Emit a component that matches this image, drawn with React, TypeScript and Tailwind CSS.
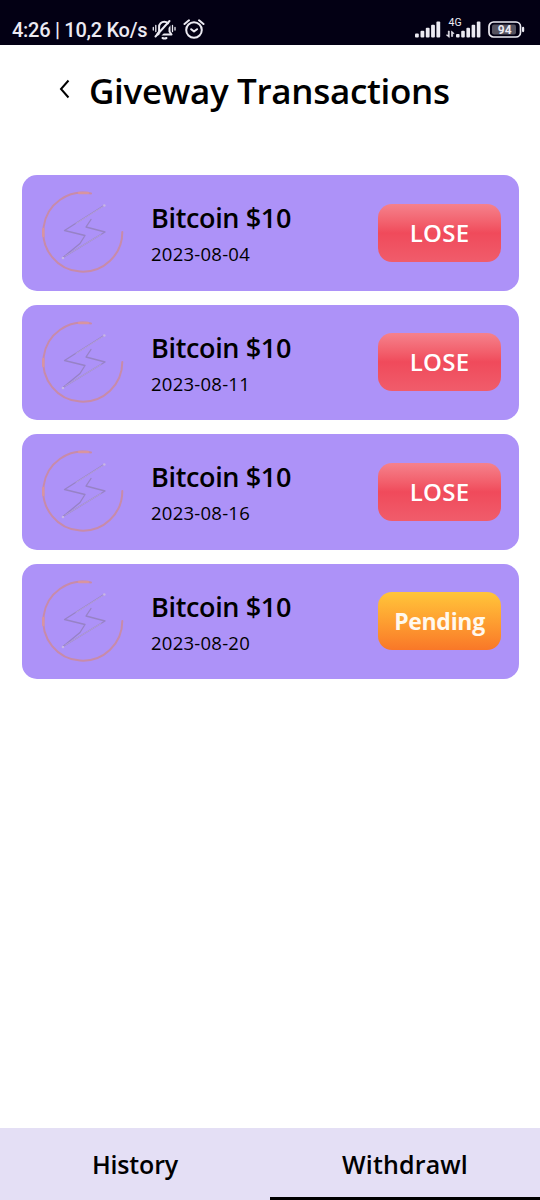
type Status = "lose" | "pending";

interface Transaction {
  title: string;
  date: string;
  status: Status;
}

const transactions: Transaction[] = [
  { title: "Bitcoin $10", date: "2023-08-04", status: "lose" },
  { title: "Bitcoin $10", date: "2023-08-11", status: "lose" },
  { title: "Bitcoin $10", date: "2023-08-16", status: "lose" },
  { title: "Bitcoin $10", date: "2023-08-20", status: "pending" },
];

function MutedBellIcon() {
  return (
    <svg width="25" height="22" viewBox="0 0 25 22" fill="none" stroke="currentColor" strokeWidth="2" strokeLinecap="round" strokeLinejoin="round">
      <path d="M6 15.500h13.500l-2-3V8a5.200 5.200 0 0 0-10.400 0v4.500L5 15.500" />
      <path d="M5.500 19.500 19 4" stroke="#030014" strokeWidth="2.500" strokeLinecap="butt" />
      <path d="M3.500 17.500 17.500 2" />
      <path d="M10.500 19q2 1 4 0" />
      <path d="M3.800 6.500v6M1.300 8.500v2.500M20.500 6.500v6M23 8.500v2.500" strokeWidth="1.300" />
    </svg>
  );
}

function AlarmIcon() {
  return (
    <svg width="22" height="22" viewBox="0 0 22 22" fill="none" stroke="currentColor" strokeWidth="2" strokeLinecap="round" strokeLinejoin="round">
      <circle cx="11" cy="11" r="7.800" />
      <path d="M1.500 5 6 1.300M20.500 5 16 1.300M8.200 10.200l2.800 2.300 3-2.300" />
    </svg>
  );
}

function SignalIcon() {
  return (
    <svg width="26" height="17" viewBox="0 0 26 17" fill="currentColor">
      <rect x="0" y="12.500" width="3.800" height="4" rx="1" />
      <rect x="5.500" y="9.800" width="3.800" height="6.700" rx="1" />
      <rect x="10.800" y="6.800" width="3.800" height="9.700" rx="1" />
      <rect x="16.100" y="3.800" width="3.800" height="12.700" rx="1" />
      <rect x="21.400" y="0.500" width="3.800" height="16" rx="1" />
    </svg>
  );
}

function MobileDataIcon() {
  return (
    <svg width="35" height="20" viewBox="0 0 35 20" fill="currentColor" overflow="visible">
      <text x="2.500" y="8" fontSize="10.500" fontFamily="Roboto, sans-serif">4G</text>
      <path d="M2.300 13v4H0.300L3.300 19.500V13zM5.500 18.500V13L8.200 15.500H6.700v3z" stroke="currentColor" strokeWidth="0.600" />
      <rect x="10" y="16" width="3.600" height="3.500" rx="1" />
      <rect x="15.200" y="12.800" width="3.600" height="6.700" rx="1" />
      <rect x="20.400" y="9.800" width="3.600" height="9.700" rx="1" />
      <rect x="25.600" y="6.800" width="3.600" height="12.700" rx="1" />
      <rect x="30.800" y="3.500" width="3.600" height="16" rx="1" />
    </svg>
  );
}

function BatteryIcon() {
  return (
    <svg width="37" height="17" viewBox="0 0 37 17" fill="none">
      <rect x="1" y="1" width="31.500" height="15" rx="4.500" stroke="currentColor" strokeWidth="1.700" />
      <rect x="4" y="3.500" width="24" height="10" rx="2" fill="#55525f" />
      <rect x="34" y="5.800" width="2.200" height="5.400" rx="1.100" fill="currentColor" />
      <text x="16.700" y="12.700" textAnchor="middle" fontSize="12" fontWeight="700" fontFamily="Roboto, sans-serif" fill="currentColor">94</text>
    </svg>
  );
}

function StatusBar() {
  return (
    <div className="flex h-[45px] items-start bg-[#030014] pl-3 pr-[15px] pt-[19px] font-[Roboto,sans-serif] text-[#eceaf2]">
      <span className="w-[140px] whitespace-nowrap text-[20px] font-medium leading-[23px] tracking-[-0.280px]">4:26 | 10,2 Ko/s</span>
      <MutedBellIcon />
      <span className="ml-[6px]"><AlarmIcon /></span>
      <div className="ml-auto mt-[2px] flex items-start">
        <SignalIcon />
        <div className="-mt-[3px] ml-[5px]"><MobileDataIcon /></div>
        <div className="ml-[7px]"><BatteryIcon /></div>
      </div>
    </div>
  );
}

function BoltLogo() {
  return (
    <svg width="92" height="92" viewBox="0 0 92 92" fill="none" strokeLinecap="round" strokeLinejoin="round">
      <path d="M55 7.500A39.500 39.500 0 1 0 86.300 46" stroke="#c88ba8" strokeWidth="2" />
      <path d="M43 7h9M7.300 43v7" stroke="#d8949f" strokeWidth="2.500" />
      <path d="M68 19.500 28.500 44.500 49 49.500 44 57.500 27 71.500" stroke="#9782c6" strokeWidth="1.300" />
      <path d="M55 33.500 50 41l19 5-42 25.500" stroke="#9782c6" strokeWidth="1.300" />
      <path d="M67 20.500 40 37.500M65 48.500 29 70.200" stroke="#b9a3dc" strokeWidth="0.800" />
      <circle cx="68.300" cy="19.500" r="1.300" fill="#c7b5e4" />
      <circle cx="27" cy="72" r="1.300" fill="#c7b5e4" />
    </svg>
  );
}

function StatusButton({ status }: { status: Status }) {
  if (status === "pending") {
    return (
      <button className="h-[58px] w-[123px] rounded-[14px] bg-linear-to-b from-[#ffc53a] to-[#f97728] text-[23px] font-bold text-[#fff8ee]">
        <span className="tracking-[-0.300px]">Pending</span>
      </button>
    );
  }
  return (
    <button className="h-[58px] w-[123px] rounded-[14px] bg-linear-to-b from-[#f5818c] via-[#f04a5b] to-[#f05c6b] text-[24px] font-semibold text-white">
      <span className="tracking-[0.300px]">LOSE</span>
    </button>
  );
}

function TransactionCard({ title, date, status }: Transaction) {
  return (
    <li className="flex h-[115.500px] items-center rounded-[15px] bg-[#ad92f8] pl-[14.500px] pr-[17.500px]">
      <div className="-mt-px"><BoltLogo /></div>
      <div className="ml-[23px] flex flex-col whitespace-nowrap pt-[5px]">
        <span className="text-[27px] font-semibold leading-[38px] tracking-[-0.350px]">{title}</span>
        <span className="text-[18.500px] leading-[34px] tracking-[0.250px]">{date}</span>
      </div>
      <div className="ml-auto flex"><StatusButton status={status} /></div>
    </li>
  );
}

export default function App() {
  return (
    <div className="flex h-[1200px] w-[540px] flex-col overflow-hidden bg-white font-['Open_Sans',sans-serif] text-black">
      <StatusBar />
      <header className="flex h-[92px] items-center pl-[59px]">
        <svg className="mb-1" width="11" height="20" viewBox="0 0 11 20" fill="none" stroke="currentColor" strokeWidth="2">
          <path d="M9.500 1.500 2 10l7.500 8.500" />
        </svg>
        <h1 className="ml-[19px] whitespace-nowrap text-[35px] font-semibold tracking-[-0.320px]">Giveway Transactions</h1>
      </header>
      <ul className="mt-[38px] flex flex-col gap-[14px] px-[21.500px]">
        {transactions.map((t) => (
          <TransactionCard key={t.date} {...t} />
        ))}
      </ul>
      <nav className="mt-auto grid h-[72px] grid-cols-2 bg-[#e4dff5] text-[25px] font-semibold">
        <button className="border-b-[3px] border-transparent pt-[5px] tracking-[-0.150px]">History</button>
        <button className="border-b-[3px] border-black pt-[5px] tracking-[0.150px]">Withdrawl</button>
      </nav>
    </div>
  );
}
